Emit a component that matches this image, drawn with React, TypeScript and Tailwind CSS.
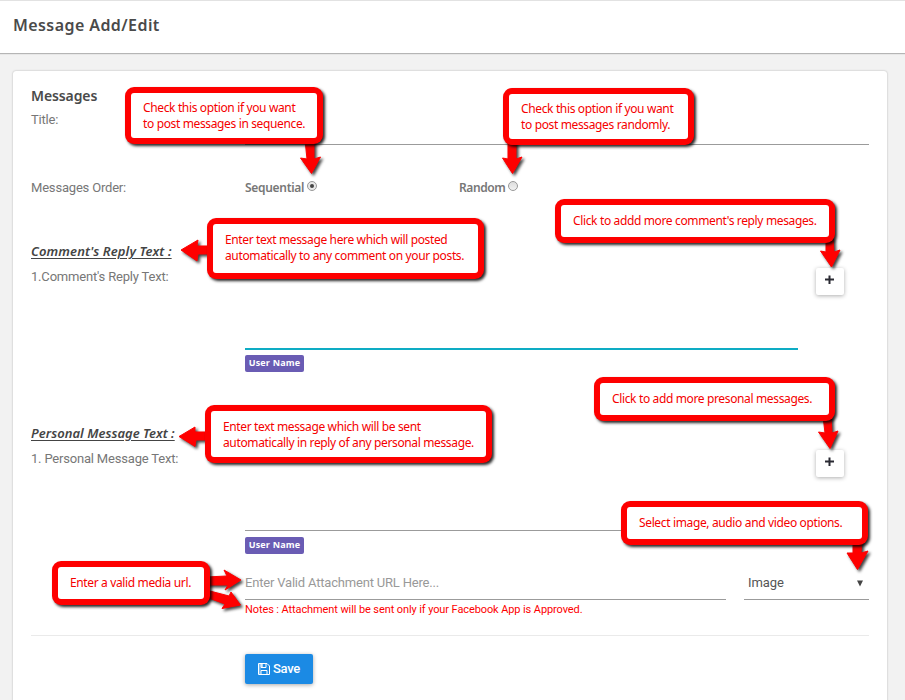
import React from "react";

type CalloutProps = { className: string; lines: string[]; textClass: string };

function Callout({ className, lines, textClass }: CalloutProps) {
  return (
    <div
      className={
        "absolute rounded-[9px] bg-[#fe0000] p-[6px] shadow-[2px_2px_3px_0px_rgba(0,0,0,0.85)] " + className
      }
    >
      <div className="h-full rounded-[3px] bg-white pl-3">
        <div
          className={
            "whitespace-nowrap font-['Noto_Sans',sans-serif] text-[12px] leading-4 tracking-[-0.36px] text-[#f50000] " + textClass
          }
        >
          {lines.map((l) => (
            <div key={l}>{l}</div>
          ))}
        </div>
      </div>
    </div>
  );
}

const arrows = [
  "M305 140 L314 140 L314 159 L320.5 157 L311.5 173.5 L300.5 158 L307 159 Z",
  "M508 140 L516 140 L516 159 L522 157 L512.5 173.5 L502.5 158 L508 159 Z",
  "M826 238 L833 238 L834 252 L840 250 L831.5 267 L820.5 251 L826 252 Z",
  "M823 416 L831 416 L832 433 L838 431 L830 448.5 L818.5 432 L825 433 Z",
  "M853 540 L862 540 L861 553 L868 551 L857.5 569.5 L847 553 L853 553 Z",
  "M211 246 L197 246 L198 240 L181 250 L197 261 L198 254 L211 254 Z",
  "M209 432 L195 432 L195 427 L179 436.5 L195 446.5 L196 440 L209 440 Z",
  "M206 577 L227 576 L224 570 L241 580 L225 590 L228 585 L206 585 Z",
  "M206 590 L229 596 L231 592 L240.5 605 L222 608.5 L225 604 L206 597 Z",
];

function Arrows() {
  return (
    <svg
      className="pointer-events-none absolute left-0 top-0 drop-shadow-[2px_2px_1.5px_rgba(0,0,0,0.75)]"
      width="905"
      height="700"
      viewBox="0 0 905 700"
    >
      {arrows.map((d) => (
        <path key={d} d={d} fill="#fe0000" stroke="#fe0000" strokeWidth="1" strokeLinejoin="round" />
      ))}
    </svg>
  );
}

function FloppyIcon() {
  return (
    <svg width="12" height="12" viewBox="0 0 12 12" fill="none" stroke="white">
      <path d="M0.5 0.5H9L11.5 3V11.5H0.5Z" />
      <path d="M3 11.5V7.5H9V11.5" />
      <path d="M3 0.5V4.5H8V0.5" />
      <path d="M3 1H5V4H3Z" fill="white" fillOpacity="0.6" stroke="none" />
      <path d="M1 1H2.5V11H1Z" fill="white" fillOpacity="0.4" stroke="none" />
    </svg>
  );
}

function PlusIcon() {
  return (
    <svg className="-ml-px" width="9" height="9" viewBox="0 0 9 9" fill="#2a2a33">
      <path d="M3.5 0.5H5.5V3.5H9V5.5H5.5V9H3.5V5.5H0V3.5H3.5Z" />
    </svg>
  );
}

function Label({ children }: { children: React.ReactNode }) {
  return (
    <div className="w-[214px] shrink-0 whitespace-nowrap pt-px text-[13px] leading-5 tracking-[-0.19px] text-[#777]">
      {children}
    </div>
  );
}

function MessageSection({
  title,
  titleClass,
  label,
  line,
}: {
  title: string;
  titleClass: string;
  label: string;
  line: string;
}) {
  return (
    <section className="h-[182px]">
      <h3
        className={
          "h-[25px] font-['Noto_Sans',sans-serif] text-[13px] font-semibold italic leading-5 text-[#444] underline underline-offset-2 " +
          titleClass
        }
      >
        {title}
      </h3>
      <div className="flex">
        <Label>{label}</Label>
        <div className="w-[553px]">
          <div className={line} />
          <span className="flex h-[17px] w-[59px] items-center justify-center rounded-[2px] bg-[#6a5cb4] pb-[2px] font-['Open_Sans','Noto_Sans',sans-serif] text-[9px] font-bold leading-none tracking-[0.2px] text-white">
            User Name
          </span>
        </div>
        <button className="ml-[18px] mt-[2px] flex h-[27px] w-7 items-start justify-center rounded-[2px] bg-white pt-[7px] shadow-[0_1px_4px_rgba(0,0,0,0.32)]">
          <PlusIcon />
        </button>
      </div>
    </section>
  );
}

export default function App() {
  return (
    <div className="relative h-[700px] w-[905px] overflow-hidden bg-[#f2f2f2] font-[Roboto,sans-serif]">
      <header className="h-[53px] border-t border-[#e2e2e2] bg-white pl-[13px] pt-3 shadow-[0_1px_1px_rgba(0,0,0,0.25)]">
        <h1 className="font-['Noto_Sans',sans-serif] text-[16px] font-semibold leading-6 tracking-[0.42px] text-[#4a4a4a]">
          Message Add/Edit
        </h1>
      </header>
      <main className="ml-[13px] mt-[18px] h-[640px] w-[874px] rounded-[3px] bg-white px-[18px] pt-[14px] shadow-[0_0_2px_rgba(0,0,0,0.3)]">
        <h2 className="h-6 font-['Noto_Sans',sans-serif] text-[14px] font-semibold leading-[22px] tracking-[-0.1px] text-[#4a4a4a]">
          Messages
        </h2>
        <div className="flex h-9">
          <Label>Title:</Label>
          <div className="flex-1 border-b border-[#9b9b9b]" />
        </div>
        <div className="flex h-[96px] pt-[32px]">
          <Label>Messages Order:</Label>
          <label className="flex h-5 w-[214px] items-center font-['Noto_Sans',sans-serif] text-[12px] font-semibold tracking-[-0.3px] text-[#777]">
            <span className="pt-[2px]">Sequential</span>
            <span className="mb-[2px] ml-[3px] flex h-[10px] w-[10px] items-center justify-center rounded-full border border-[#999] bg-[#e8e8e8]">
              <span className="h-1 w-1 rounded-full bg-[#444]" />
            </span>
          </label>
          <label className="flex h-5 items-center font-['Noto_Sans',sans-serif] text-[12px] font-semibold tracking-[-0.4px] text-[#777]">
            <span className="pt-[2px]">Random</span>
            <span className="mb-[2px] ml-[3px] h-[10px] w-[10px] rounded-full border border-[#999] bg-gradient-to-b from-[#ddd] to-[#f2f2f2]" />
          </label>
        </div>
        <MessageSection
          title="Comment's Reply Text :"
          titleClass="tracking-[0.12px]"
          label="1.Comment's Reply Text:"
          line="mb-[5px] h-[84px] border-b-2 border-[#0eacc4]"
        />
        <MessageSection
          title="Personal Message Text :"
          titleClass="tracking-[0.03px]"
          label="1. Personal Message Text:"
          line="mb-[6px] h-[83px] border-b border-[#9b9b9b]"
        />
        <div className="-mt-[32px] ml-[214px]">
          <div className="flex justify-between text-[13px] leading-5">
            <div className="h-[27px] w-[481px] border-b border-[#9b9b9b] tracking-[-0.19px] text-[#999]">
              Enter Valid Attachment URL Here...
            </div>
            <div className="flex h-[27px] w-[125px] justify-between border-b border-[#9b9b9b] pl-[4px] pr-[6px] tracking-[-0.1px] text-[#555]">
              Image
              <svg className="mt-[7px]" width="6" height="7" viewBox="0 0 6 7" fill="#444">
                <path d="M0 0.5H6L3 6.5Z" />
              </svg>
            </div>
          </div>
          <p className="mt-[2px] text-[11px] leading-4 tracking-[-0.1px] text-[#fe0000]">
            Notes : Attachment will be sent only if your Facebook App is Approved.
          </p>
          <hr className="-ml-[214px] mt-[17px] border-[#eaeaea]" />
          <button className="mt-[18px] flex h-[30px] w-[68px] items-center justify-center gap-[3px] rounded-[2px] bg-[#1b8ae4] text-[13px] font-medium tracking-[-0.3px] text-white shadow-[0_1px_4px_rgba(0,0,0,0.35)]">
            <FloppyIcon />
            Save
          </button>
        </div>
      </main>
      <Arrows />
      <Callout className="left-[125px] top-[87px] h-[57px] w-[198px]" textClass="pt-[7px]" lines={["Check this option if you want", "to post messages in sequence."]} />
      <Callout className="left-[503px] top-[88px] h-[57px] w-[191px]" textClass="pt-[7px]" lines={["Check this option if you want", "to post messages randomly."]} />
      <Callout className="left-[207px] top-[218px] h-[61px] w-[277px]" textClass="pt-2" lines={["Enter text message here which will posted", "automatically to any comment on your posts."]} />
      <Callout className="left-[555px] top-[199px] h-[44px] w-[280px]" textClass="pt-2" lines={["Click to addd more comment's reply mesages."]} />
      <Callout className="left-[205px] top-[405px] h-[58px] w-[287px]" textClass="pt-2" lines={["Enter text message which will be sent", "automatically in reply of any personal message."]} />
      <Callout className="left-[594px] top-[377px] h-[44px] w-[241px]" textClass="pt-2" lines={["Click to add more presonal messages."]} />
      <Callout className="left-[621px] top-[501px] h-[44px] w-[247px]" textClass="pt-2" lines={["Select image, audio and video options."]} />
      <Callout className="left-[52px] top-[561px] h-[44px] w-[158px]" textClass="pt-2" lines={["Enter a valid media url."]} />
    </div>
  );
}
